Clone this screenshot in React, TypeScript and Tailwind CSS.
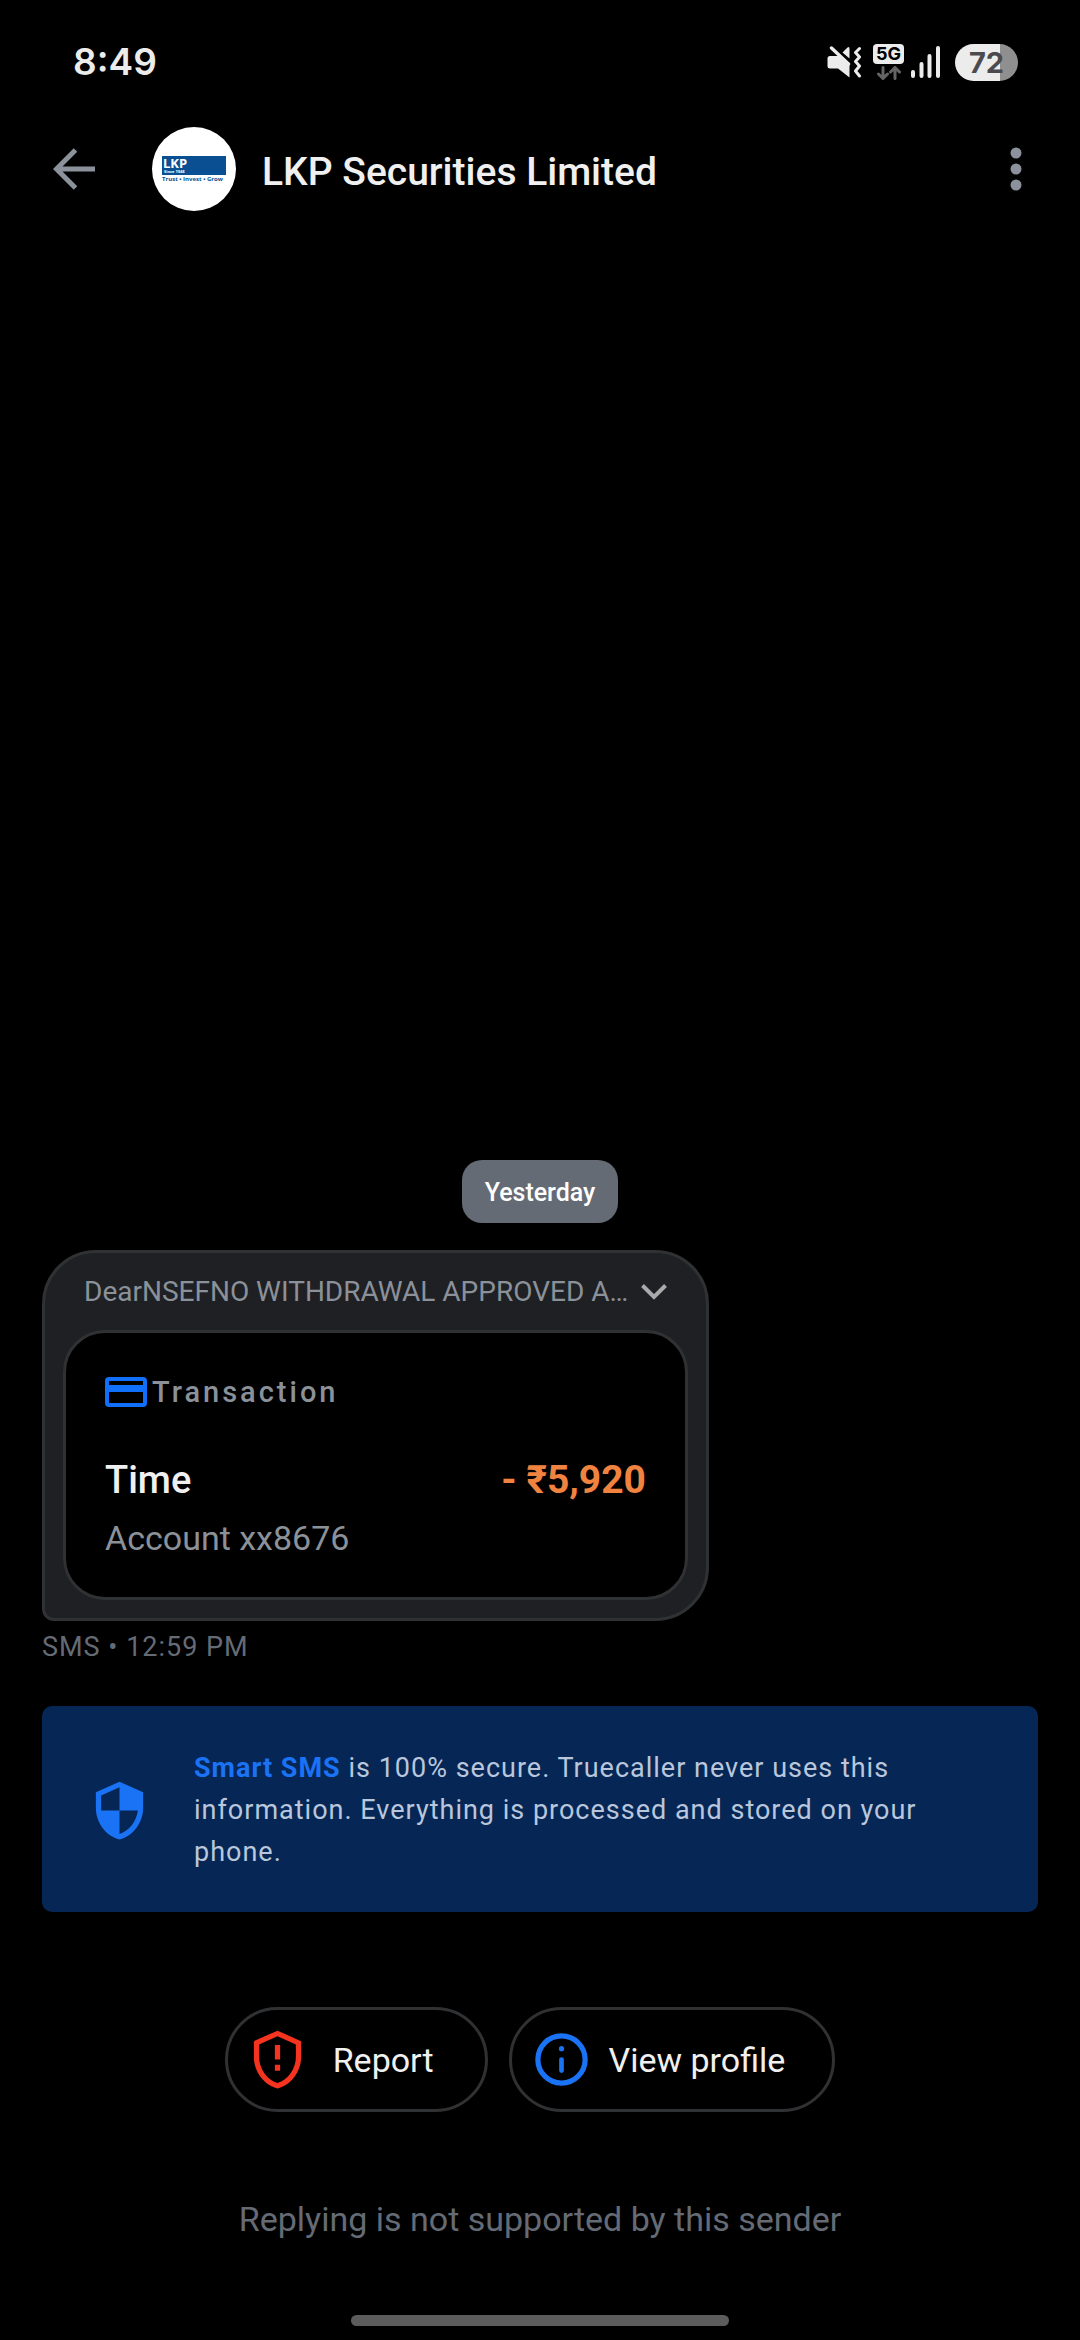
import { FC, ReactNode } from "react";
import { MdSecurity } from "react-icons/md";

interface ActionButtonProps {
  icon: ReactNode;
  label: string;
  className: string;
}

const MuteIcon: FC = () => (
  <svg viewBox="0 0 36 32" className="w-9 h-8" aria-label="Vibrate">
    <path
      d="M3 10h9L22.500 19v12.500L11 22.500H3a2.500 2.500 0 0 1-2.500-2.500V12.500A2.500 2.500 0 0 1 3 10z"
      fill="#ececec"
    />
    <path d="M15.500 6.500L20.500 1.500Q22.500 0 22.500 3V12.500z" fill="#ececec" />
    <path
      d="M4.500 2L21.500 18"
      stroke="#ececec"
      strokeWidth="3.400"
      strokeLinecap="round"
    />
    <path
      d="M32.500 2.500L28.500 6.500L32.500 11L28.500 15.500L32.500 20L28.500 25L32.500 30"
      stroke="#ececec"
      strokeWidth="3"
      strokeLinecap="round"
      strokeLinejoin="round"
      fill="none"
    />
  </svg>
);

const NetworkIcon: FC = () => (
  <div className="flex flex-col items-center gap-0.5">
    <span className="w-[31px] h-5 rounded bg-[#ececec] text-black font-[Inter] font-bold text-[18px] leading-5 text-center">
      5G
    </span>
    <svg
      viewBox="0 0 24 14"
      className="w-6 h-3.5"
      fill="none"
      stroke="#646464"
      strokeWidth="3"
      strokeLinecap="round"
      strokeLinejoin="round"
    >
      <path d="M6 1.500v11M1.500 8L6 12.500L10.500 8" />
      <path d="M18 12.500v-11M13.500 6L18 1.500L22.500 6" />
    </svg>
  </div>
);

const SignalIcon: FC = () => (
  <svg
    viewBox="0 0 30 34"
    className="w-[30px] h-[34px]"
    stroke="#ececec"
    strokeWidth="4"
    strokeLinecap="round"
  >
    <path d="M2 27v4M10.500 19v12M18.500 11v20M27 3v28" />
  </svg>
);

const StatusBar: FC = () => (
  <div className="flex items-center justify-between h-[124px] pl-[73px] pr-[62px]">
    <time className="font-[Inter] font-semibold text-[37px] leading-10 text-[#ececec]">
      8:49
    </time>
    <div className="flex items-center">
      <MuteIcon />
      <div className="ml-2.5 mr-[7px]">
        <NetworkIcon />
      </div>
      <SignalIcon />
      <div className="ml-3.5 w-[63px] h-[37px] rounded-full bg-linear-to-r from-[#ececec] from-72% to-[#8f8f8f] to-72% text-center font-[Inter] font-bold text-[29px] leading-[37px] text-[#4b4b4f]">
        72
      </div>
    </div>
  </div>
);

const Logo: FC = () => (
  <svg
    viewBox="0 0 84 84"
    className="size-[84px] rounded-full bg-white"
    fontFamily="Open Sans, sans-serif"
    fontWeight="700"
  >
    <rect x="10" y="29" width="64" height="19" fill="#0b4f93" />
    <text x="11" y="41" fontSize="13" fill="#fff">
      LKP
    </text>
    <text x="12" y="46" fontSize="4" fill="#fff">
      Since 1948
    </text>
    <text x="10" y="54" fontSize="6" fill="#0b4f93">
      Trust • Invest • Grow
    </text>
  </svg>
);

const Header: FC = () => (
  <header className="flex items-center h-[90px] pl-[53px] pr-[52px]">
    <button aria-label="Back">
      <svg
        viewBox="0 0 42 42"
        className="size-[42px]"
        fill="none"
        stroke="#8b929b"
        strokeWidth="5"
      >
        <path d="M42 21H5M22.500 2L3.500 21L22.500 40" />
      </svg>
    </button>
    <div className="ml-[57px]">
      <Logo />
    </div>
    <h1 className="ml-[26px] flex-1 pt-1.5 text-[39px] leading-12 font-medium text-[#f0f0f0]">
      LKP Securities Limited
    </h1>
    <button aria-label="More options" className="px-1.5">
      <svg viewBox="0 0 12 44" className="w-3 h-11" fill="#8b929b">
        <circle cx="6" cy="6" r="5.500" />
        <circle cx="6" cy="22" r="5.500" />
        <circle cx="6" cy="38" r="5.500" />
      </svg>
    </button>
  </header>
);

const TransactionCard: FC = () => (
  <section className="rounded-[42px] border-3 border-[#303133] bg-black p-[39px]">
    <div className="flex items-center gap-[5px] h-10">
      <svg viewBox="0 0 42 30" className="w-[42px] h-[30px]">
        <rect
          x="2"
          y="2"
          width="38"
          height="26"
          rx="2"
          fill="none"
          stroke="#1070fc"
          strokeWidth="4"
        />
        <rect x="2" y="8" width="38" height="7" fill="#1070fc" />
      </svg>
      <h2 className="text-[29px] leading-10 font-medium tracking-[3px] text-[#8b9199]">
        Transaction
      </h2>
    </div>
    <div className="mt-11 flex justify-between leading-12">
      <span className="text-[38px] font-medium text-[#f0f0f0]">Time</span>
      <span className="text-[39px] font-bold text-[#f08340]">- ₹5,920</span>
    </div>
    <p className="mt-3.5 text-[34px] leading-10 text-[#8b9199]">
      Account xx8676
    </p>
  </section>
);

const Message: FC = () => (
  <article className="w-[667px] max-w-full rounded-[54px] rounded-bl-[12px] border-3 border-[#303133] bg-[#1f2024] px-[18px] pb-[18px]">
    <button className="flex w-full items-center justify-between h-[77px] px-[21px]">
      <span className="whitespace-nowrap text-[28px] leading-10 text-[#8b9199]">
        DearNSEFNO WITHDRAWAL APPROVED A…
      </span>
      <svg
        viewBox="0 0 26 16"
        className="w-[26px] h-4 shrink-0"
        fill="none"
        stroke="#aaaaaa"
        strokeWidth="4"
      >
        <path d="M1.500 1.500L13 13L24.500 1.500" />
      </svg>
    </button>
    <TransactionCard />
  </article>
);

const ActionButton: FC<ActionButtonProps> = ({ icon, label, className }) => (
  <button
    className={`flex items-center h-[105px] rounded-full border-3 border-[#303133] text-[34px] leading-10 text-[#f0f0f0] ${className}`}
  >
    {icon}
    {label}
  </button>
);

const ReportIcon: FC = () => (
  <svg viewBox="0 0 24 24" className="size-[63px]" fill="#f5331f">
    <path d="M12 1L3 5v6c0 5.550 3.840 10.740 9 12 5.160-1.260 9-6.450 9-12V5l-9-4zm7 10c0 4.520-2.980 8.690-7 9.930-4.020-1.240-7-5.410-7-9.930V6.300l7-3.110 7 3.110V11z" />
    <path d="M11 6.500h2v5.500h-2zM11 14h2v2.300h-2z" />
  </svg>
);

const InfoIcon: FC = () => (
  <svg viewBox="0 0 24 24" className="size-[63px]" fill="none" stroke="#1a72f5">
    <circle cx="12" cy="12" r="9" strokeWidth="2" />
    <path d="M12 12v4.200" strokeWidth="1.800" strokeLinecap="round" />
    <circle cx="12" cy="7.900" r="1" fill="#1a72f5" stroke="none" />
  </svg>
);

export default function App() {
  return (
    <div className="flex min-h-screen flex-col bg-black font-[Roboto,sans-serif]">
      <StatusBar />
      <Header />
      <main className="flex flex-1 flex-col justify-end px-[42px]">
        <div className="self-center rounded-[20px] bg-[#656b75] px-[23px] pt-3 pb-2.5 text-[25px] leading-[41px] font-medium text-white">
          Yesterday
        </div>
        <div className="mt-[27px]">
          <Message />
        </div>
        <p className="mt-1.5 text-[27px] leading-10 tracking-[1px] text-[#656b75]">
          SMS • 12:59 PM
        </p>
        <div className="mt-[39px] flex items-center rounded-[10px] bg-[#062755] pt-[41px] pb-[39px] pl-[46px] pr-[90px]">
          <MdSecurity className="size-[63px] shrink-0 text-[#1a72f5]" />
          <p className="ml-[43px] text-[27px] leading-[42px] tracking-[1px] text-[#b9c6dc]">
            <strong className="font-bold text-[#1a72f5]">Smart SMS</strong> is
            100% secure. Truecaller never uses this information. Everything is
            processed and stored on your phone.
          </p>
        </div>
        <div className="mt-[95px] flex justify-center gap-[21px] pr-5">
          <ActionButton
            icon={<ReportIcon />}
            label="Report"
            className="gap-6 pl-[18px] pr-[51px]"
          />
          <ActionButton
            icon={<InfoIcon />}
            label="View profile"
            className="gap-4 pl-[18px] pr-[47px]"
          />
        </div>
      </main>
      <footer className="flex flex-col items-center pb-3.5">
        <p className="mt-[87px] text-[34px] leading-10 text-[#656b75]">
          Replying is not supported by this sender
        </p>
        <div className="mt-[76px] h-[11px] w-[378px] rounded-full bg-[#5c5c5c]" />
      </footer>
    </div>
  );
}
